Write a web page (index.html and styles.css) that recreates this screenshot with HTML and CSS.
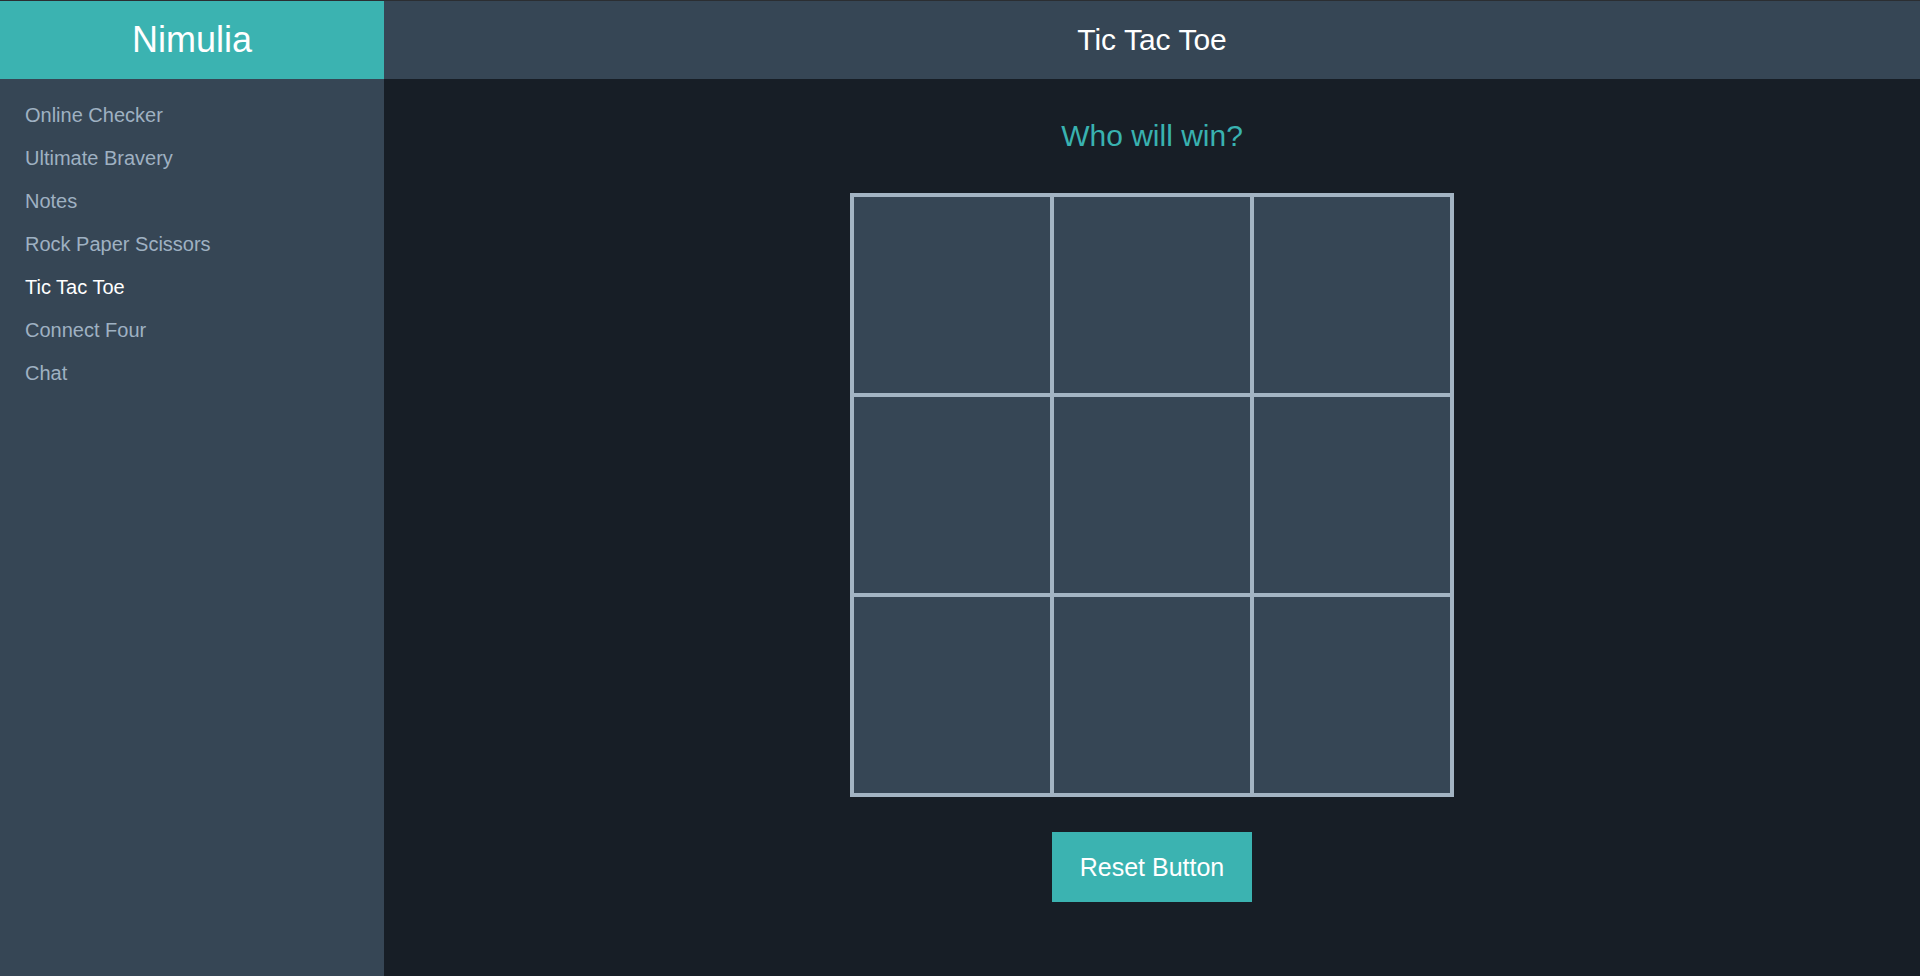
FILE: index.html
```html
<!DOCTYPE html>
<html lang="en">
<head>
<meta charset="utf-8">
<title>Tic Tac Toe - Nimulia</title>
<link rel="stylesheet" href="styles.css">
</head>
<body>
<div class="app">
  <aside class="sidebar">
    <div class="brand">Nimulia</div>
    <nav class="nav">
      <a class="nav-item" href="#">Online Checker</a>
      <a class="nav-item" href="#">Ultimate Bravery</a>
      <a class="nav-item" href="#">Notes</a>
      <a class="nav-item" href="#">Rock Paper Scissors</a>
      <a class="nav-item active" href="#">Tic Tac Toe</a>
      <a class="nav-item" href="#">Connect Four</a>
      <a class="nav-item" href="#">Chat</a>
    </nav>
  </aside>
  <main class="main">
    <header class="topbar">Tic Tac Toe</header>
    <section class="content">
      <h2 class="status">Who will win?</h2>
      <div class="board">
        <div class="cell"></div>
        <div class="cell"></div>
        <div class="cell"></div>
        <div class="cell"></div>
        <div class="cell"></div>
        <div class="cell"></div>
        <div class="cell"></div>
        <div class="cell"></div>
        <div class="cell"></div>
      </div>
      <button class="reset">Reset Button</button>
    </section>
  </main>
</div>
</body>
</html>
```
FILE: styles.css
```css
* {
  box-sizing: border-box;
}

html, body {
  margin: 0;
  padding: 0;
  height: 100%;
}

body {
  font-family: "Liberation Sans", Arial, sans-serif;
  background: #171e26;
  border-top: 1px solid #2b2e32;
  overflow: hidden;
}

.app {
  display: grid;
  grid-template-columns: 384px 1fr;
  height: 975px;
}

.sidebar {
  background: #364655;
  display: flex;
  flex-direction: column;
}

.brand {
  height: 78px;
  background: #3bb3b1;
  color: #ffffff;
  font-size: 36px;
  display: flex;
  align-items: center;
  justify-content: center;
}

.nav {
  display: flex;
  flex-direction: column;
  padding: 15px 0;
}

.nav-item {
  display: block;
  padding: 10px 25px;
  font-size: 20px;
  line-height: 23px;
  color: #9fb1c2;
  text-decoration: none;
}

.nav-item.active {
  color: #ffffff;
}

.main {
  display: flex;
  flex-direction: column;
  background: #171e26;
}

.topbar {
  height: 78px;
  background: #364655;
  color: #ffffff;
  font-size: 30px;
  display: flex;
  align-items: center;
  justify-content: center;
}

.content {
  display: flex;
  flex-direction: column;
  align-items: center;
}

.status {
  margin: 39px 0 0;
  font-size: 30px;
  line-height: 36px;
  font-weight: normal;
  color: #39b2b0;
}

.board {
  margin-top: 39px;
  display: grid;
  grid-template-columns: repeat(3, 200px);
  grid-template-rows: repeat(3, 200px);
  border: 2px solid #a3b4c3;
}

.cell {
  background: #364655;
  border: 2px solid #a3b4c3;
}

.reset {
  margin-top: 35px;
  width: 200px;
  height: 70px;
  background: #3bb3b1;
  color: #ffffff;
  border: none;
  font-family: "Liberation Sans", Arial, sans-serif;
  font-size: 25px;
  cursor: pointer;
}
```
